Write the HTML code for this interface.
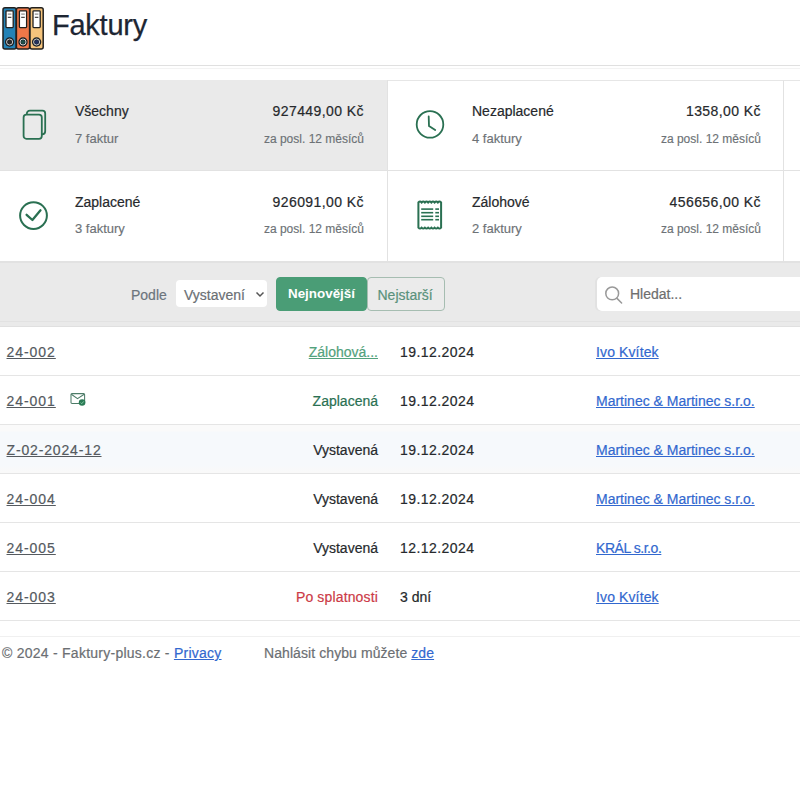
<!DOCTYPE html>
<html><head><meta charset="utf-8">
<style>
*{margin:0;padding:0;box-sizing:border-box}
html,body{width:800px;height:800px;overflow:hidden;background:#fff;font-family:"Liberation Sans",sans-serif;color:#26292c}
.a{position:absolute;white-space:nowrap}
.hl{position:absolute;left:0;width:800px;height:1px}
.vl{position:absolute;width:1px}
.t14{font-size:14px;line-height:16px;-webkit-text-stroke:0.2px currentColor}
.t12{font-size:12px;line-height:14px;-webkit-text-stroke:0.15px currentColor}
.gray{color:#6d7276}
.lnk{color:#3268cf;text-decoration:underline}
.num{color:#555a5f;text-decoration:underline;letter-spacing:0.95px;text-underline-offset:1px}
</style></head><body>
<!-- logo -->
<svg class="a" style="left:0;top:0" width="50" height="55" viewBox="0 0 50 55">
  <rect x="3" y="7.8" width="13.2" height="41.2" rx="2" fill="#2382b6" stroke="#22201e" stroke-width="1.5"/>
  <rect x="6" y="10.8" width="7.2" height="16.8" rx="0.8" fill="#fff" stroke="#22201e" stroke-width="1.3"/>
  <line x1="7.8" y1="14.1" x2="11.4" y2="14.1" stroke="#8a8a8a" stroke-width="1.2"/>
  <line x1="7.8" y1="17.3" x2="11.4" y2="17.3" stroke="#1e1e1e" stroke-width="1"/>
  <circle cx="9.6" cy="42" r="4.7" fill="#1c2226"/>
  <circle cx="9.6" cy="42" r="3.0" fill="none" stroke="#d0d0d0" stroke-width="1.0"/>
  <circle cx="9.6" cy="42" r="2.1" fill="#2a2a2a"/>
  <rect x="16.4" y="7.8" width="13.2" height="41.2" rx="2" fill="#ef7748" stroke="#22201e" stroke-width="1.5"/>
  <rect x="19.4" y="10.8" width="7.2" height="16.8" rx="0.8" fill="#fff" stroke="#22201e" stroke-width="1.3"/>
  <line x1="21.2" y1="14.1" x2="24.799999999999997" y2="14.1" stroke="#8a8a8a" stroke-width="1.2"/>
  <line x1="21.2" y1="17.3" x2="24.799999999999997" y2="17.3" stroke="#1e1e1e" stroke-width="1"/>
  <circle cx="23.0" cy="42" r="4.7" fill="#1c2226"/>
  <circle cx="23.0" cy="42" r="3.0" fill="none" stroke="#d0d0d0" stroke-width="1.0"/>
  <circle cx="23.0" cy="42" r="2.1" fill="#1f4f4a"/>
  <rect x="30" y="7.8" width="13.2" height="41.2" rx="2" fill="#f5c47c" stroke="#22201e" stroke-width="1.5"/>
  <rect x="33" y="10.8" width="7.2" height="16.8" rx="0.8" fill="#fff" stroke="#22201e" stroke-width="1.3"/>
  <line x1="34.8" y1="14.1" x2="38.4" y2="14.1" stroke="#8a8a8a" stroke-width="1.2"/>
  <line x1="34.8" y1="17.3" x2="38.4" y2="17.3" stroke="#1e1e1e" stroke-width="1"/>
  <circle cx="36.6" cy="42" r="4.7" fill="#1c2226"/>
  <circle cx="36.6" cy="42" r="3.0" fill="none" stroke="#d0d0d0" stroke-width="1.0"/>
  <circle cx="36.6" cy="42" r="2.1" fill="#23315e"/>
</svg>
<div class="a" style="left:52px;top:9px;font-size:29px;line-height:32px;letter-spacing:-0.25px;color:#1d2633;-webkit-text-stroke:0.25px #1d2633">Faktury</div>

<div class="hl" style="top:65px;background:#e0e0e0"></div>
<div class="hl" style="top:68px;background:#f3f3f3"></div>

<!-- cards -->
<div class="a" style="left:0;top:80px;width:388px;height:91px;background:#eaeaea;border-right:1px solid #e2e2e2;border-bottom:1px solid #e2e2e2"></div>
<div class="a" style="left:388px;top:80px;width:396px;height:91px;border-top:1px solid #e6e6e6;border-right:1px solid #e2e2e2;border-bottom:1px solid #e2e2e2"></div>
<div class="a" style="left:784px;top:80px;width:16px;height:91px;border-top:1px solid #e6e6e6;border-bottom:1px solid #e2e2e2"></div>
<div class="a" style="left:0;top:171px;width:388px;height:91px;border-right:1px solid #e2e2e2;border-bottom:1px solid #e2e2e2"></div>
<div class="a" style="left:388px;top:171px;width:396px;height:91px;border-right:1px solid #e2e2e2;border-bottom:1px solid #e2e2e2"></div>
<div class="a" style="left:784px;top:171px;width:16px;height:91px;border-bottom:1px solid #e2e2e2"></div>

<!-- card 1 -->
<svg class="a" style="left:20px;top:106px" width="30" height="36" viewBox="0 0 30 36">
  <g fill="none" stroke="#2a7052" stroke-width="1.8">
    <path d="M6.8 8 Q6.8 4.7 10 4.7 L22.5 4.7 Q25.2 4.7 25.2 7.5 L25.2 25.3 Q25.2 28.3 22 28.3"/>
    <rect x="3.6" y="8.6" width="18.2" height="24.2" rx="2.8"/>
  </g>
</svg>
<div class="a t14" style="left:75px;top:103px">Všechny</div>
<div class="a t12 gray" style="left:75px;top:132px;font-size:13px">7 faktur</div>
<div class="a t14" style="right:436px;top:103px;letter-spacing:0.42px">927449,00 Kč</div>
<div class="a t12 gray" style="right:436px;top:132px">za posl. 12 měsíců</div>

<!-- card 2 -->
<svg class="a" style="left:412px;top:106px" width="36" height="36" viewBox="0 0 36 36">
  <g fill="none" stroke="#2a7052" stroke-width="1.8" stroke-linecap="round">
    <circle cx="18" cy="18.4" r="13.3"/>
    <path d="M16.7 10.5 L17 20 L23.2 24"/>
  </g>
</svg>
<div class="a t14" style="left:472px;top:103px">Nezaplacené</div>
<div class="a t12 gray" style="left:472px;top:132px;font-size:13px">4 faktury</div>
<div class="a t14" style="right:39px;top:103px;letter-spacing:0.42px">1358,00 Kč</div>
<div class="a t12 gray" style="right:39px;top:132px">za posl. 12 měsíců</div>

<!-- card 3 -->
<svg class="a" style="left:16px;top:197px" width="36" height="36" viewBox="0 0 36 36">
  <g fill="none" stroke="#2a7052" stroke-width="2" stroke-linecap="round" stroke-linejoin="round">
    <circle cx="17.5" cy="18.6" r="13.4"/>
    <path d="M10.6 17.8 L16.4 23 L24.5 13.3" stroke-width="2.3"/>
  </g>
</svg>
<div class="a t14" style="left:75px;top:194px">Zaplacené</div>
<div class="a t12 gray" style="left:75px;top:222px;font-size:13px">3 faktury</div>
<div class="a t14" style="right:436px;top:194px;letter-spacing:0.42px">926091,00 Kč</div>
<div class="a t12 gray" style="right:436px;top:222px">za posl. 12 měsíců</div>

<!-- card 4 -->
<svg class="a" style="left:412px;top:197px" width="36" height="36" viewBox="0 0 36 36">
  <g fill="none" stroke="#2a7052" stroke-width="2">
    <path d="M6.40 5.50 Q8.02 3.70 9.64 5.50 Q11.26 3.70 12.89 5.50 Q14.51 3.70 16.13 5.50 Q17.75 3.70 19.37 5.50 Q20.99 3.70 22.61 5.50 Q24.24 3.70 25.86 5.50 Q27.48 3.70 29.10 5.50 L29.10 30.70 Q27.48 32.50 25.86 30.70 Q24.24 32.50 22.61 30.70 Q20.99 32.50 19.37 30.70 Q17.75 32.50 16.13 30.70 Q14.51 32.50 12.89 30.70 Q11.26 32.50 9.64 30.70 Q8.02 32.50 6.40 30.70 Z"/>
  </g>
  <g stroke="#2a7052" stroke-width="1.6">
    <line x1="9.2" y1="12.1" x2="21.2" y2="12.1"/><line x1="23.3" y1="12.1" x2="27" y2="12.1"/>
    <line x1="9.2" y1="15.7" x2="21.2" y2="15.7"/><line x1="23.3" y1="15.7" x2="27" y2="15.7"/>
    <line x1="9.2" y1="19.3" x2="21.2" y2="19.3"/><line x1="23.3" y1="19.3" x2="27" y2="19.3"/>
    <line x1="9.2" y1="22.7" x2="21.2" y2="22.7"/><line x1="23.3" y1="22.7" x2="27" y2="22.7"/>
  </g>
</svg>
<div class="a t14" style="left:472px;top:194px">Zálohové</div>
<div class="a t12 gray" style="left:472px;top:222px;font-size:13px">2 faktury</div>
<div class="a t14" style="right:39px;top:194px;letter-spacing:0.42px">456656,00 Kč</div>
<div class="a t12 gray" style="right:39px;top:222px">za posl. 12 měsíců</div>

<!-- filter bar -->
<div class="a" style="left:0;top:262px;width:800px;height:65px;background:#eaeaea;border-top:1px solid #e2e2e2"></div>
<div class="hl" style="top:321px;background:#e2e2e2"></div>
<div class="hl" style="top:326px;background:#e0e0e0"></div>
<div class="a t14" style="left:131px;top:287px;color:#6c757d">Podle</div>
<div class="a" style="left:176px;top:280px;width:91px;height:27px;background:#fff;border-radius:4px"></div>
<div class="a t14" style="left:184px;top:286.5px;color:#6b7075">Vystavení</div>
<svg class="a" style="left:254px;top:290px" width="12" height="9" viewBox="0 0 12 9"><path d="M2.5 2.5 L6 6 L9.5 2.5" fill="none" stroke="#555" stroke-width="1.5"/></svg>
<div class="a" style="left:276px;top:277px;width:91px;height:34px;background:#4a9d76;border-radius:4px;border:1px solid #4a9d76"></div>
<div class="a" style="left:288px;top:286px;color:#fff;font-weight:bold;font-size:13.4px;line-height:16px">Nejnovější</div>
<div class="a" style="left:366.5px;top:277px;width:78.5px;height:34px;border:1px solid #a6bdb1;border-radius:4px;background:#ebebeb"></div>
<div class="a t14" style="left:377.5px;top:287px;color:#5a927c">Nejstarší</div>
<div class="a" style="left:597px;top:277px;width:210px;height:34px;background:#fff;border-radius:5px;box-shadow:-2px 0 0 #e2e2e2"></div>
<svg class="a" style="left:603px;top:285px" width="22" height="22" viewBox="0 0 22 22"><g fill="none" stroke="#999" stroke-width="1.5" stroke-linecap="round"><circle cx="9.2" cy="8.4" r="6.4"/><path d="M14 13.4 L18.6 18"/></g></svg>
<div class="a t14" style="left:630px;top:286px;color:#6e6e6e">Hledat...</div>

<!-- table -->
<div class="a" style="left:0;top:425px;width:800px;height:48px;background:linear-gradient(#fafafa 0,#fafafa 6px,#f6f9fc 7px,#f6f9fc 41px,#f9f9f9 46px)"></div>
<div class="hl" style="top:375px;background:#e5e5e5"></div>
<div class="hl" style="top:424px;background:#e5e5e5"></div>
<div class="hl" style="top:473px;background:#e5e5e5"></div>
<div class="hl" style="top:522px;background:#e5e5e5"></div>
<div class="hl" style="top:571px;background:#e5e5e5"></div>
<div class="hl" style="top:620px;background:#e5e5e5"></div>
<div class="hl" style="top:636px;background:#f0f0f0"></div>

<div class="a t14 num" style="left:6.5px;top:344px">24-002</div>
<div class="a t14" style="right:422px;top:344px;color:#52a27c;text-decoration:underline;text-underline-offset:1px">Zálohová...</div>
<div class="a t14" style="left:400px;top:344px;letter-spacing:0.45px">19.12.2024</div>
<div class="a t14 lnk" style="left:596px;top:344px;letter-spacing:0.12px">Ivo Kvítek</div>

<div class="a t14 num" style="left:6.5px;top:393px">24-001</div>
<svg class="a" style="left:69px;top:391px" width="18" height="16" viewBox="0 0 18 16"><g fill="none" stroke="#4d7c68" stroke-width="1.05"><rect x="2" y="2.6" width="13.6" height="9.8" rx="1"/><path d="M2.3 3.2 L8.5 7.6 L15.2 3.2"/></g><circle cx="13.1" cy="11.5" r="3.3" fill="#2a7a55"/><path d="M11.6 11.6 L12.8 12.7 L14.7 10.4" fill="none" stroke="#7fc8a0" stroke-width="1"/></svg>
<div class="a t14" style="right:422px;top:393px;color:#2a7052">Zaplacená</div>
<div class="a t14" style="left:400px;top:393px;letter-spacing:0.45px">19.12.2024</div>
<div class="a t14 lnk" style="left:596px;top:393px">Martinec &amp; Martinec s.r.o.</div>

<div class="a t14 num" style="left:6.5px;top:442px;letter-spacing:0.85px">Z-02-2024-12</div>
<div class="a t14" style="right:422px;top:442px">Vystavená</div>
<div class="a t14" style="left:400px;top:442px;letter-spacing:0.45px">19.12.2024</div>
<div class="a t14 lnk" style="left:596px;top:442px">Martinec &amp; Martinec s.r.o.</div>

<div class="a t14 num" style="left:6.5px;top:491px">24-004</div>
<div class="a t14" style="right:422px;top:491px">Vystavená</div>
<div class="a t14" style="left:400px;top:491px;letter-spacing:0.45px">19.12.2024</div>
<div class="a t14 lnk" style="left:596px;top:491px">Martinec &amp; Martinec s.r.o.</div>

<div class="a t14 num" style="left:6.5px;top:540px">24-005</div>
<div class="a t14" style="right:422px;top:540px">Vystavená</div>
<div class="a t14" style="left:400px;top:540px;letter-spacing:0.45px">12.12.2024</div>
<div class="a t14 lnk" style="left:596px;top:540px;letter-spacing:-0.45px">KRÁL s.r.o.</div>

<div class="a t14 num" style="left:6.5px;top:589px">24-003</div>
<div class="a t14" style="right:422px;top:589px;color:#cc3b48;letter-spacing:0.15px">Po splatnosti</div>
<div class="a t14" style="left:400px;top:589px">3 dní</div>
<div class="a t14 lnk" style="left:596px;top:589px;letter-spacing:0.12px">Ivo Kvítek</div>

<!-- footer -->
<div class="a t14" style="left:2px;top:645px;color:#6c6f73;letter-spacing:0.25px">© 2024 - Faktury-plus.cz - <span class="lnk">Privacy</span></div>
<div class="a t14" style="left:264px;top:645px;color:#6c6f73;letter-spacing:0.08px">Nahlásit chybu můžete <span class="lnk">zde</span></div>
</body></html>
